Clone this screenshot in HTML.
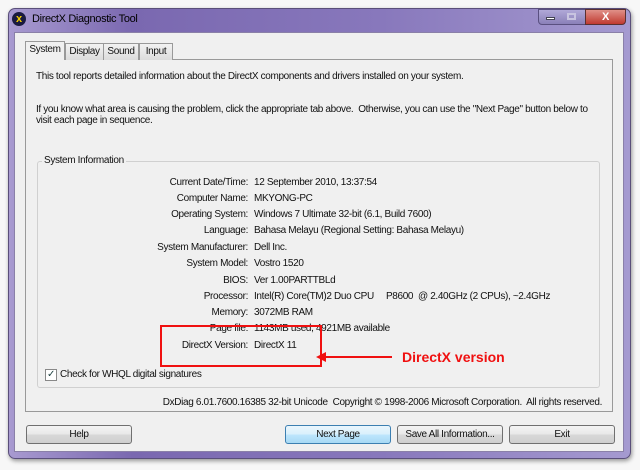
<!DOCTYPE html>
<html><head><style>
*{margin:0;padding:0;box-sizing:border-box}
body{width:640px;height:470px;background:#f7f7f7;position:relative;overflow:hidden;font-family:"Liberation Sans","DejaVu Sans",sans-serif;font-size:10px;letter-spacing:-0.35px;color:#111}
.a{position:absolute;white-space:nowrap}
#win{left:8px;top:8px;width:623px;height:451px;border-radius:7px;background:linear-gradient(90deg,#a89ad0 0%,#7a68b0 20%,#8878bc 60%,#a59ad0 100%);border:1px solid #5a4f7a;box-shadow:1px 2px 4px rgba(0,0,0,.4)}
#client{left:14px;top:32px;width:610px;height:420px;background:#f0f0f0;border:1px solid #8a80a8}
.tab{position:absolute;top:43px;height:17px;border:1px solid #999;border-bottom:none;background:linear-gradient(#f2f2f2,#dcdcdc);padding:2px 0 0;text-align:center}
.btn{position:absolute;top:425px;height:19px;border:1px solid #707070;border-radius:3px;background:linear-gradient(#f4f4f4 0%,#e8e8e8 50%,#d8d8d8 51%,#cfcfcf 100%);text-align:center;line-height:17px}
.l{position:absolute;right:392px;text-align:right;white-space:nowrap}
.v{position:absolute;left:254px;white-space:nowrap}
</style></head><body>
<div id="win" class="a"></div>
<div class="a" style="left:12px;top:12px;width:14px;height:14px;border-radius:50%;background:#1a1a40;color:#f5d000;font-weight:bold;font-size:11px;line-height:14px;text-align:center;letter-spacing:0">x</div>
<div class="a" style="left:32px;top:13px;font-size:11px;color:#000">DirectX Diagnostic Tool</div>
<div class="a" style="left:538px;top:9px;width:48px;height:16px;border:1px solid #5a5080;border-radius:0 0 0 4px;background:linear-gradient(#b0a8d8,#8a80b8)"></div>
<div class="a" style="left:546px;top:17px;width:9px;height:3px;background:#fff;border:1px solid #445"></div>
<div class="a" style="left:567px;top:13px;width:9px;height:7px;border:2px solid #c8c4e0"></div>
<div class="a" style="left:585px;top:9px;width:41px;height:16px;border:1px solid #5a3030;border-radius:0 0 4px 0;background:linear-gradient(#e09088,#c03a30);color:#fff;font-weight:bold;font-size:11px;text-align:center;line-height:14px">X</div>
<div id="client" class="a"></div>
<div class="a" style="left:25px;top:59px;width:588px;height:353px;border:1px solid #999;background:#f0f0f0"></div>
<div class="tab" style="left:25px;top:41px;height:19px;width:40px;background:#f0f0f0;z-index:2">System</div>
<div class="tab" style="left:65px;width:39px">Display</div>
<div class="tab" style="left:103px;width:36px">Sound</div>
<div class="tab" style="left:139px;width:34px">Input</div>
<div class="a" style="left:36px;top:71px">This tool reports detailed information about the DirectX components and drivers installed on your system.</div>
<div class="a" style="left:36px;top:104px">If you know what area is causing the problem, click the appropriate tab above.&nbsp; Otherwise, you can use the "Next Page" button below to</div>
<div class="a" style="left:36px;top:115px">visit each page in sequence.</div>
<div class="a" style="left:37px;top:161px;width:563px;height:227px;border:1px solid #d0d0d0;border-radius:3px"></div>
<div class="a" style="left:42px;top:155px;background:#f0f0f0;padding:0 2px">System Information</div>
<div class="l" style="top:177px">Current Date/Time:</div><div class="v" style="top:177px">12 September 2010, 13:37:54</div>
<div class="l" style="top:193px">Computer Name:</div><div class="v" style="top:193px">MKYONG-PC</div>
<div class="l" style="top:209px">Operating System:</div><div class="v" style="top:209px">Windows 7 Ultimate 32-bit (6.1, Build 7600)</div>
<div class="l" style="top:225px">Language:</div><div class="v" style="top:225px">Bahasa Melayu (Regional Setting: Bahasa Melayu)</div>
<div class="l" style="top:242px">System Manufacturer:</div><div class="v" style="top:242px">Dell Inc.</div>
<div class="l" style="top:258px">System Model:</div><div class="v" style="top:258px">Vostro 1520</div>
<div class="l" style="top:275px">BIOS:</div><div class="v" style="top:275px">Ver 1.00PARTTBLd</div>
<div class="l" style="top:291px">Processor:</div><div class="v" style="top:291px">Intel(R) Core(TM)2 Duo CPU &nbsp;&nbsp;&nbsp;&nbsp;P8600 &nbsp;@ 2.40GHz (2 CPUs), ~2.4GHz</div>
<div class="l" style="top:307px">Memory:</div><div class="v" style="top:307px">3072MB RAM</div>
<div class="l" style="top:323px">Page file:</div><div class="v" style="top:323px">1143MB used, 4921MB available</div>
<div class="l" style="top:340px">DirectX Version:</div><div class="v" style="top:340px">DirectX 11</div>
<div class="a" style="left:160px;top:325px;width:162px;height:42px;border:2px solid #f01010"></div>
<div class="a" style="left:322px;top:356px;width:70px;height:2px;background:#f01010"></div>
<div class="a" style="left:316px;top:352px;width:0;height:0;border-top:5px solid transparent;border-bottom:5px solid transparent;border-right:10px solid #f01010"></div>
<div class="a" style="left:402px;top:349px;color:#f01010;font-weight:bold;font-size:14px;letter-spacing:0">DirectX version</div>
<div class="a" style="left:45px;top:369px;width:12px;height:12px;border:1px solid #888;background:#fff;color:#244;font-size:10px;line-height:10px;text-align:center">✓</div>
<div class="a" style="left:60px;top:369px">Check for WHQL digital signatures</div>
<div class="a" style="right:38px;top:397px">DxDiag 6.01.7600.16385 32-bit Unicode&nbsp; Copyright © 1998-2006 Microsoft Corporation.&nbsp; All rights reserved.</div>
<div class="btn" style="left:26px;width:106px">Help</div>
<div class="btn" style="left:285px;width:106px;border-color:#3c7fb1;background:linear-gradient(#eaf6fd 0%,#d9f0fc 50%,#bee6fd 51%,#a7d9f5 100%)">Next Page</div>
<div class="btn" style="left:397px;width:106px">Save All Information...</div>
<div class="btn" style="left:509px;width:106px">Exit</div>
</body></html>
